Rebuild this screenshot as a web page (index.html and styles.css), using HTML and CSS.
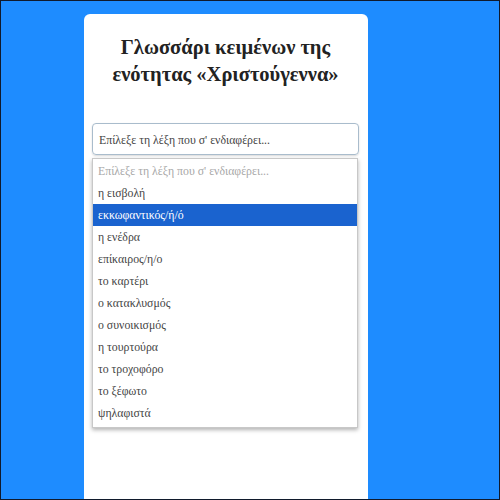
FILE: index.html
```html
<!DOCTYPE html>
<html lang="el">
<head>
<meta charset="utf-8">
<title>Γλωσσάρι κειμένων</title>
<link rel="stylesheet" href="styles.css">
</head>
<body>
<div class="frame">
  <div class="card">
    <h1 class="title">Γλωσσάρι κειμένων της<br>ενότητας «Χριστούγεννα»</h1>

    <div class="picker">
      <div class="picker-box">Επίλεξε τη λέξη που σ' ενδιαφέρει...</div>
      <ul class="picker-list">
        <li class="placeholder">Επίλεξε τη λέξη που σ' ενδιαφέρει...</li>
        <li>η εισβολή</li>
        <li class="active">εκκωφαντικός/ή/ό</li>
        <li>η ενέδρα</li>
        <li>επίκαιρος/η/ο</li>
        <li>το καρτέρι</li>
        <li>ο κατακλυσμός</li>
        <li>ο συνοικισμός</li>
        <li>η τουρτούρα</li>
        <li>το τροχοφόρο</li>
        <li>το ξέφωτο</li>
        <li>ψηλαφιστά</li>
      </ul>
    </div>
  </div>
</div>
</body>
</html>
```

FILE: styles.css
```css
html, body {
  margin: 0;
  padding: 0;
}
.frame {
  box-sizing: border-box;
  width: 500px;
  height: 500px;
  border: 1px solid #101a2c;
  background-color: #1e8cff;
  overflow: hidden;
  padding: 13px 0 0 83px;
}
.card {
  width: 284px;
  height: 500px;
  background-color: #fff;
  border-radius: 6px 6px 0 0;
  padding: 20px 9px 0 8px;
  box-sizing: border-box;
}
.title {
  margin: 0 0 35px;
  text-align: center;
  font-family: "Liberation Serif", serif;
  font-size: 20.5px;
  line-height: 27px;
  font-weight: bold;
  color: #222;
}
.picker {
  font-family: "Liberation Serif", serif;
  font-size: 11.8px;
  color: #444;
}
.picker-box {
  height: 32px;
  line-height: 32px;
  border: 1px solid #a9bccc;
  border-radius: 4px;
  padding: 0 6px;
  box-sizing: border-box;
  box-shadow: 0 1px 2px rgba(0,0,0,0.15);
}
.picker-list {
  list-style: none;
  margin: 3px 1px 0 0;
  padding: 1px 0 3px;
  border: 1px solid #c8c8c8;
  box-shadow: 0 2px 4px rgba(0,0,0,0.3);
}
.picker-list li {
  height: 22px;
  line-height: 22px;
  padding: 0 5px;
}
.picker-list .placeholder {
  color: #a8a8a8;
}
.picker-list .active {
  background-color: #1a63cf;
  color: #fff;
}
```
